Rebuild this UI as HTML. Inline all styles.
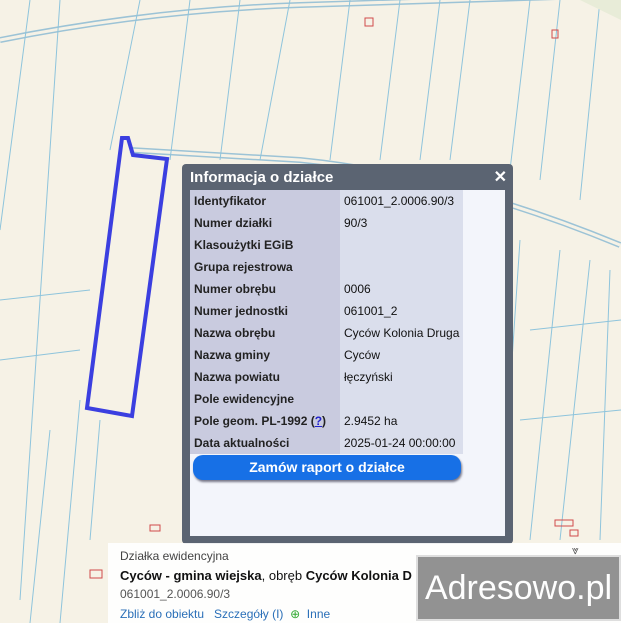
<!DOCTYPE html><html><head><meta charset="utf-8"><style>
body{margin:0;width:621px;height:623px;overflow:hidden;background:#f6f2e6;font-family:"Liberation Sans",Arial,sans-serif;position:relative}
svg.map{position:absolute;left:0;top:0}
.dlg{position:absolute;left:182px;top:164px;width:331px;height:380px;background:#5b6472;border-radius:4px}
.tt{position:absolute;left:8px;top:5px;color:#fff;font-weight:bold;font-size:15px}
.x{position:absolute;right:6px;top:3px;color:#fff;font-weight:bold;font-size:16px}
.in{position:absolute;left:8px;top:26px;width:315px;height:346px;background:#f3f5fb}
table{border-collapse:collapse;font-size:12px;color:#111}
td{height:22px;padding:0 4px;white-space:nowrap}
td.l{background:#c9cbdf;width:142px;font-weight:bold;color:#222}
td.v{background:#dadeec;width:114px}
.btn{position:absolute;left:3px;top:265px;width:268px;height:25px;background:#1770e6;border-radius:10px;color:#fff;font-weight:bold;font-size:14px;text-align:center;line-height:25px;box-shadow:1px 2px 2px #778}
.pan{position:absolute;left:108px;top:543px;width:513px;height:80px;background:rgba(255,255,255,.9);font-size:12px}
.wm{position:absolute;left:416px;top:555px;width:201px;height:62px;background:#8d8d8d;border:2px solid #ddd;color:#fff;font-size:34px;line-height:62px;text-align:center;opacity:.95}
</style></head><body>
<svg class="map" width="621" height="623" fill="none" stroke="#7fb8d8" stroke-width="1">
<path d="M0 40 Q150 10 300 5 L620 -5" stroke="#9cc3d6" stroke-width="6"/>
<path d="M0 40 Q150 10 300 5 L620 -5" stroke="#f6f2e6" stroke-width="3"/>
<path d="M130 150 L300 160 Q450 175 620 245" stroke="#9cc3d6" stroke-width="6"/>
<path d="M130 150 L300 160 Q450 175 620 245" stroke="#f6f2e6" stroke-width="3"/>
<g stroke="#8ec4dc">
<path d="M30 0 L0 230M60 0 L20 600M140 0 L110 150M190 0 L170 160M240 0 L220 160M290 0 L260 160M350 0 L330 160M400 0 L380 160M440 0 L420 160M470 0 L450 160M530 0 L510 170M560 0 L540 180M600 0 L580 200"/>
<path d="M80 400 L60 623M50 430 L30 623M100 420 L90 540M560 250 L530 540M590 260 L560 540M610 270 L600 540M520 240 L500 540M480 200 L470 540"/>
<path d="M0 300 L90 290M0 360 L80 350M530 330 L621 320M520 420 L621 410"/>
</g>
<g stroke="#d04a4a"><rect x="150" y="525" width="10" height="6"/><rect x="90" y="570" width="12" height="8"/><rect x="555" y="520" width="18" height="6"/><rect x="570" y="530" width="8" height="6"/><rect x="365" y="18" width="8" height="8"/><rect x="552" y="30" width="6" height="8"/></g>
<path d="M580 0 L621 0 L621 20 Z" fill="#e8ecd8" stroke="none"/>
<path d="M122 138 L128 138 L133 155 L167 159 L132 416 L87 408 Z" stroke="#3b3fe0" stroke-width="4"/>
</svg>
<div class="dlg"><div class="tt">Informacja o działce</div><div class="x">✕</div>
<div class="in"><table>
<tr><td class="l">Identyfikator</td><td class="v">061001_2.0006.90/3</td></tr>
<tr><td class="l">Numer działki</td><td class="v">90/3</td></tr>
<tr><td class="l">Klasoużytki EGiB</td><td class="v"></td></tr>
<tr><td class="l">Grupa rejestrowa</td><td class="v"></td></tr>
<tr><td class="l">Numer obrębu</td><td class="v">0006</td></tr>
<tr><td class="l">Numer jednostki</td><td class="v">061001_2</td></tr>
<tr><td class="l">Nazwa obrębu</td><td class="v">Cyców Kolonia Druga</td></tr>
<tr><td class="l">Nazwa gminy</td><td class="v">Cyców</td></tr>
<tr><td class="l">Nazwa powiatu</td><td class="v">łęczyński</td></tr>
<tr><td class="l">Pole ewidencyjne</td><td class="v"></td></tr>
<tr><td class="l">Pole geom. PL-1992 (<span style="color:#22c;text-decoration:underline">?</span>)</td><td class="v">2.9452 ha</td></tr>
<tr><td class="l">Data aktualności</td><td class="v">2025-01-24 00:00:00</td></tr>
</table><div class="btn">Zamów raport o działce</div></div></div>
<div class="pan">
<div style="position:absolute;left:12px;top:6px;color:#444">Działka ewidencyjna</div>
<div style="position:absolute;left:12px;top:25px;font-size:13px;color:#111;white-space:nowrap"><b>Cyców - gmina wiejska</b>, obręb <b>Cyców Kolonia D</b></div>
<div style="position:absolute;left:12px;top:44px;color:#555">061001_2.0006.90/3</div>
<div style="position:absolute;left:12px;top:64px;color:#2a6fb8;white-space:nowrap">Zbliż do obiektu &nbsp; Szczegóły (I) &nbsp;<span style="color:#3a3">⊕</span>&nbsp; Inne</div>
<div style="position:absolute;left:464px;top:0;color:#555">⩔</div>
</div>
<div class="wm">Adresowo.pl</div>
</body></html>
